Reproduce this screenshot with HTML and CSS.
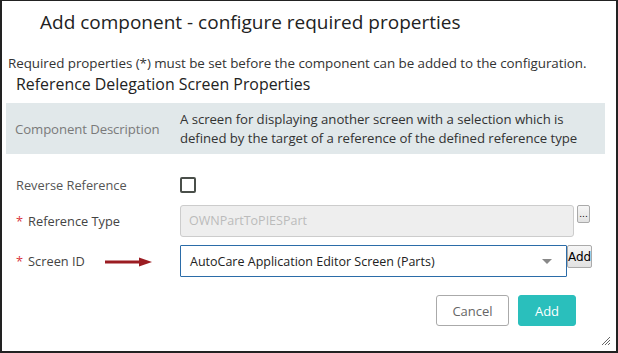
FILE: index.html
```html
<!DOCTYPE html>
<html lang="en">
<head>
    <meta charset="UTF-8">
    <title>Add component</title>
    <link rel="stylesheet" href="styles.css">
</head>
<body>
    <div class="dialog">
        <div class="dialog-title">Add component - configure required properties</div>
        <div class="note">Required properties (*) must be set before the component can be added to the configuration.</div>
        <div class="section-title">Reference Delegation Screen Properties</div>

        <div class="desc-box">
            <div class="desc-label">Component Description</div>
            <div class="desc-text">A screen for displaying another screen with a selection which is defined by the target of a reference of the defined reference type</div>
        </div>

        <div class="form-row row-reverse">
            <div class="form-label">Reverse Reference</div>
            <div class="checkbox"></div>
        </div>

        <div class="form-row row-type">
            <div class="form-label"><span class="req">*</span>Reference Type</div>
            <div class="input disabled">OWNPartToPIESPart</div>
            <button class="mini-btn dots">...</button>
        </div>

        <div class="form-row row-screen">
            <div class="form-label">
                <span class="req">*</span>Screen ID
                <svg class="arrow" width="48" height="10" viewBox="0 0 48 10">
                    <path d="M0 5 H36" stroke="#9b1c22" stroke-width="3"/>
                    <path d="M34 0.5 L47 5 L34 9.5 Z" fill="#9b1c22"/>
                </svg>
            </div>
            <div class="select">
                <span>AutoCare Application Editor Screen (Parts)</span>
                <span class="caret"></span>
            </div>
            <button class="mini-btn add-small">Add</button>
        </div>

        <div class="footer">
            <button class="btn btn-cancel">Cancel</button>
            <button class="btn btn-add">Add</button>
        </div>

        <svg class="grip" width="12" height="12" viewBox="0 0 12 12">
            <path d="M11 3 L3 11 M11 6 L6 11 M11 9 L9 11" stroke="#666" stroke-width="1"/>
        </svg>
    </div>
</body>
</html>
```

FILE: styles.css
```css
body {
    margin: 0;
    background-color: #fff;
    font-family: 'Open Sans', 'Noto Sans', sans-serif;
    color: #222;
}

.dialog {
    position: relative;
    width: 618px;
    height: 353px;
    box-sizing: border-box;
    border: 2px solid #222;
    border-top-width: 1px;
}

.dialog-title {
    height: 43px;
    line-height: 42px;
    padding-left: 38px;
    font-size: 19px;
    color: #222;
}

.note {
    margin-top: 10px;
    padding-left: 6px;
    font-size: 13.4px;
    line-height: 18px;
    color: #333;
    letter-spacing: -0.05px;
    white-space: nowrap;
}

.section-title {
    padding-left: 14px;
    font-size: 15.9px;
    line-height: 24px;
    color: #222;
}

.desc-box {
    display: flex;
    margin: 7px 11px 0 4px;
    padding: 7px 0 6px 0;
    background-color: #e1e8ea;
    font-size: 13.2px;
    line-height: 19px;
}

.desc-label {
    width: 165px;
    padding-left: 9px;
    align-self: center;
    color: #7a7a7a;
    letter-spacing: -0.1px;
}

.desc-text {
    width: 420px;
    color: #333;
    letter-spacing: -0.05px;
}

.form-row {
    display: flex;
    align-items: flex-start;
    font-size: 12.8px;
}

.form-label {
    position: relative;
    width: 164px;
    padding-left: 14px;
    color: #444;
}

.req {
    color: #d9363e;
    margin-right: 5px;
}

.row-reverse {
    margin-top: 15px;
    height: 32px;
    align-items: center;
}

.row-reverse .form-label {
    color: #555;
}

.checkbox {
    width: 12px;
    height: 12px;
    border: 2px solid #4a4f4a;
    border-radius: 2px;
}

.row-type {
    margin-top: 4px;
}

.row-type .form-label,
.row-screen .form-label {
    line-height: 32px;
}

.input {
    width: 384px;
    height: 30px;
    line-height: 30px;
    padding-left: 8px;
    border: 1px solid #ccc;
    border-radius: 3px;
    font-size: 12.5px;
}

.input.disabled {
    background-color: #eee;
    color: #bbb;
}

.mini-btn {
    margin-left: 3px;
    padding: 0 2px;
    border: 1px solid #aaa;
    border-radius: 2px;
    background: linear-gradient(#f6f6f6, #e2e2e2);
    font-family: 'DejaVu Sans', sans-serif;
    color: #000;
}

.dots {
    height: 18px;
    width: 13px;
    font-size: 9px;
    line-height: 14px;
    padding: 0;
}

.row-screen {
    margin-top: 8px;
}

.arrow {
    position: absolute;
    left: 103px;
    top: 12px;
}

.select {
    display: flex;
    align-items: center;
    justify-content: space-between;
    width: 362px;
    height: 30px;
    padding: 0 14px 0 9px;
    border: 1px solid #2b6ca8;
    border-radius: 1px;
    color: #222;
    font-size: 12.5px;
}

.caret {
    width: 0;
    height: 0;
    border-left: 5px solid transparent;
    border-right: 5px solid transparent;
    border-top: 5px solid #888;
}

.add-small {
    margin-left: 0;
    height: 23px;
    width: 25px;
    padding: 0;
    font-size: 12px;
    line-height: 20px;
}

.footer {
    display: flex;
    justify-content: flex-end;
    gap: 9px;
    margin-top: 18px;
    margin-right: 40px;
}

.btn {
    height: 31px;
    border-radius: 3px;
    font-family: 'Open Sans', sans-serif;
    font-size: 13px;
    cursor: pointer;
}

.btn-cancel {
    width: 73px;
    border: 1px solid #aaa;
    background-color: #fff;
    color: #666;
}

.btn-add {
    width: 58px;
    border: 1px solid #2abfbc;
    background-color: #2abfbc;
    color: #fff;
}

.grip {
    position: absolute;
    right: 5px;
    bottom: 5px;
}
```
